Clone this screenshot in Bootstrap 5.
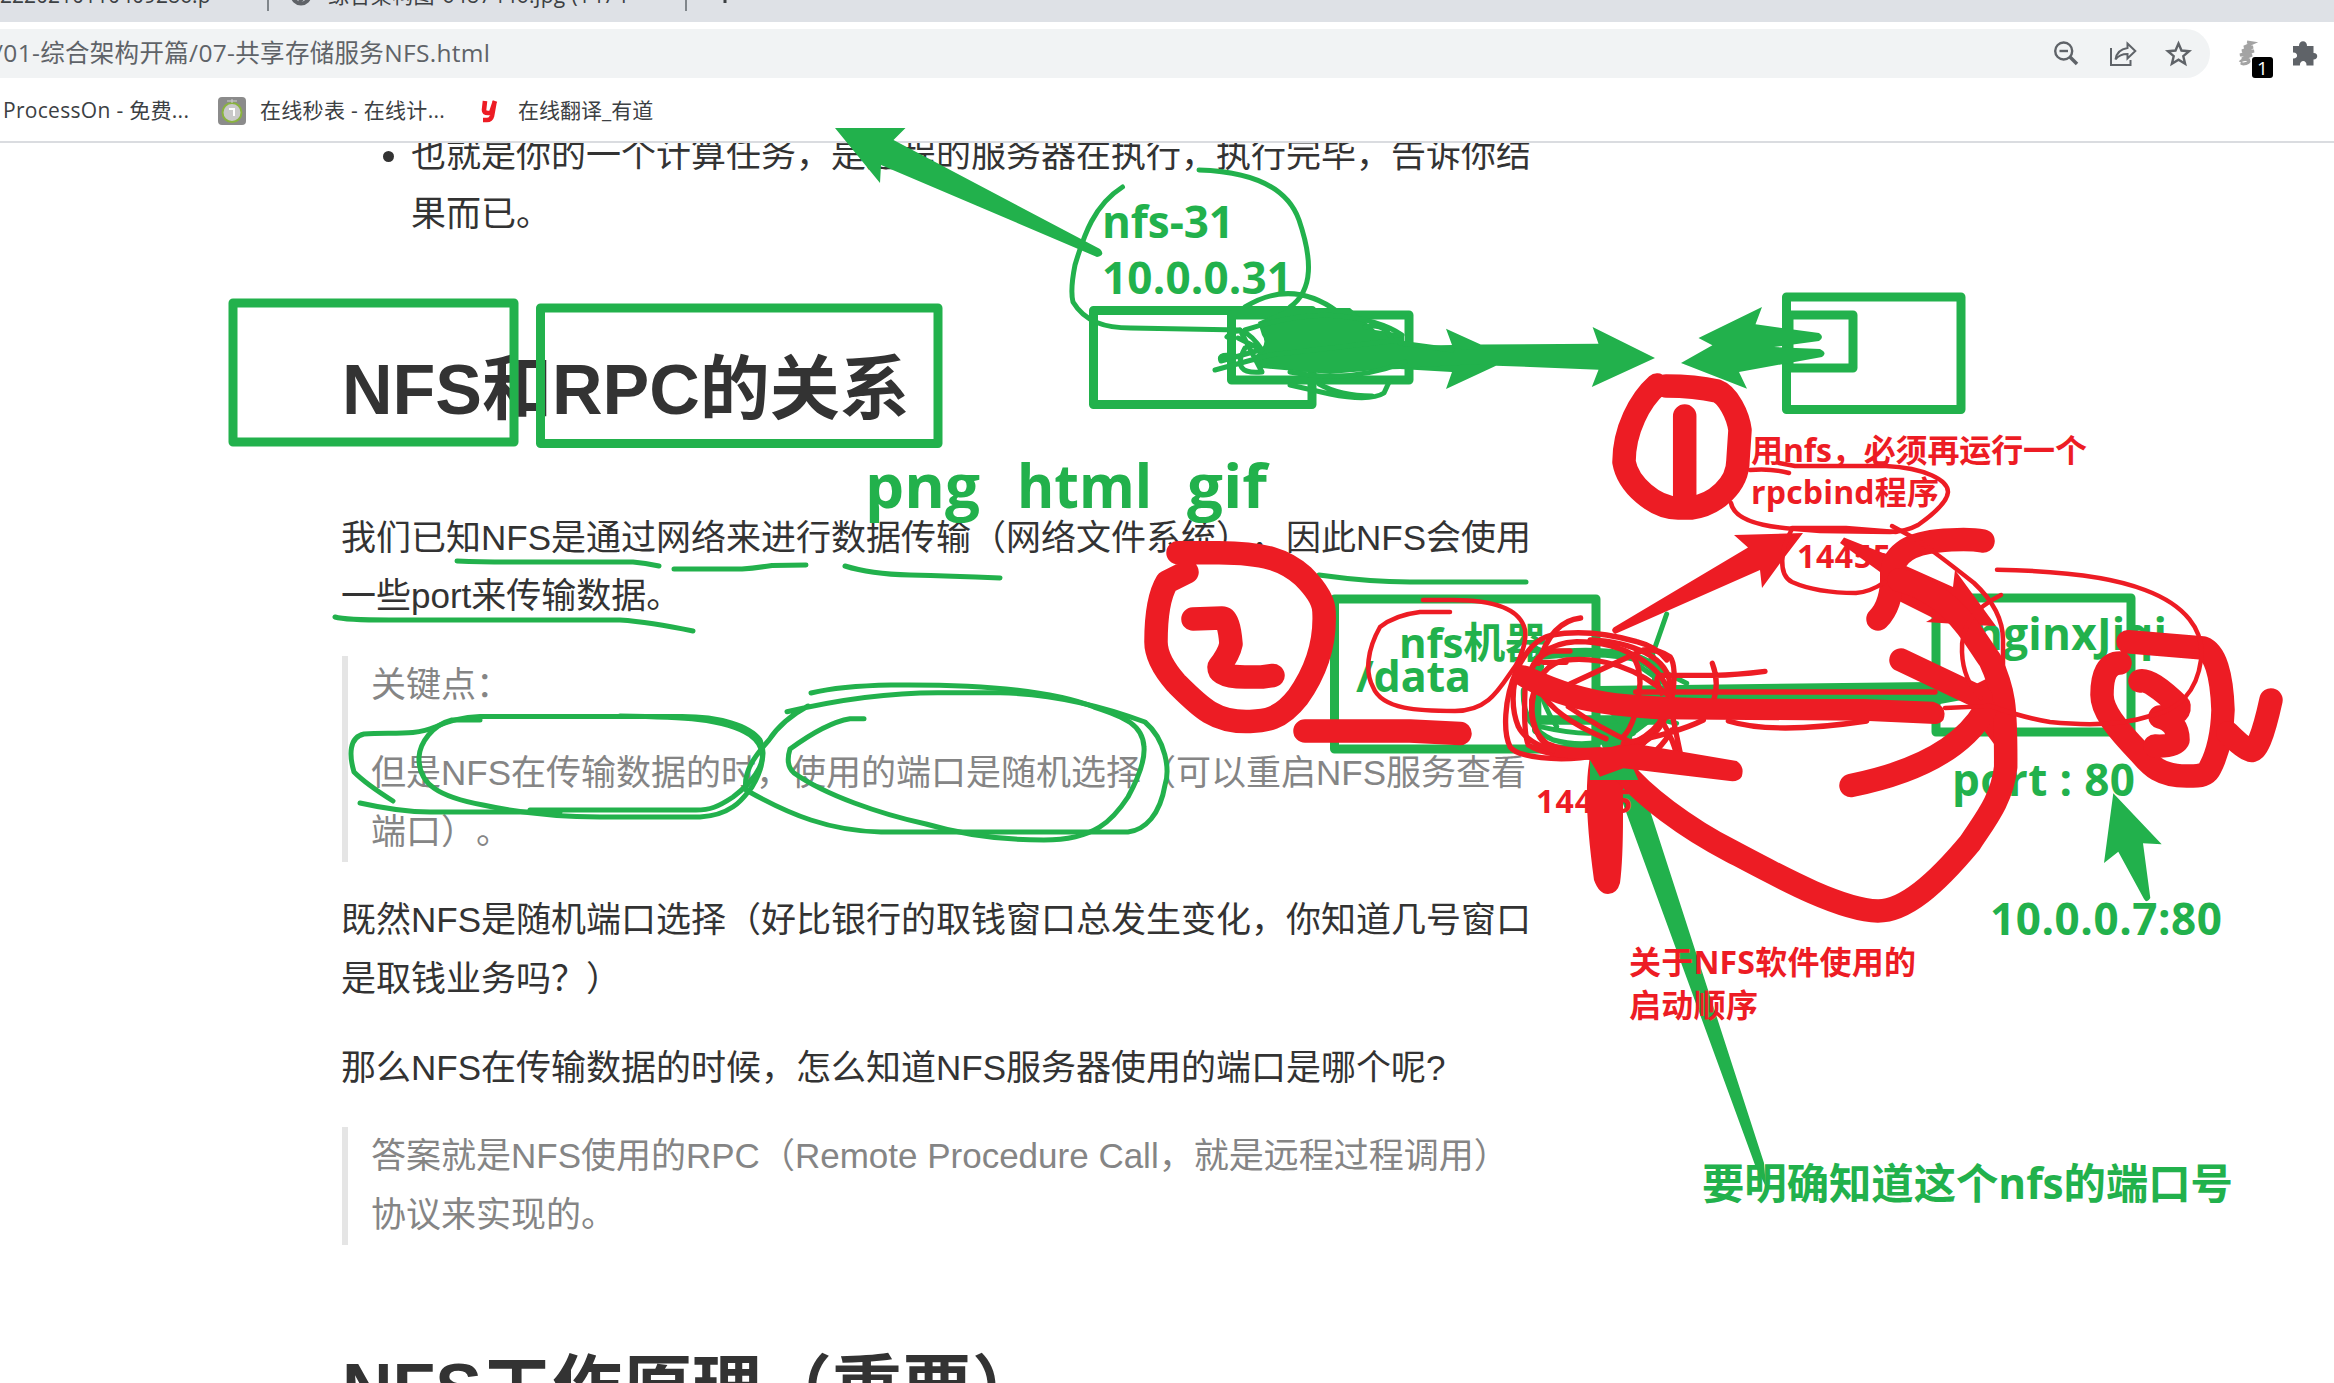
<!DOCTYPE html>
<html lang="zh-CN">
<head>
<meta charset="utf-8">
<title>07-共享存储服务NFS</title>
<link href="https://cdn.jsdelivr.net/npm/bootstrap@5.3.0/dist/css/bootstrap.min.css" rel="stylesheet">
<style>
body{width:2334px;height:1383px;overflow:hidden;background:#fff;color:#333;font-family:"Liberation Sans","Noto Sans CJK SC",sans-serif;text-spacing-trim:space-all}
.chrome-ui{font-family:"Open Sans","Noto Sans CJK SC",sans-serif}
.tabstrip{height:22px;background:#dee1e6;font-size:21px;line-height:28px;color:#3c4043}
.tabstrip>div{margin-top:-19px;height:30px;white-space:nowrap;overflow:hidden}
.tab-title{letter-spacing:.4px}
.tab-sep{width:2px;background:#80868b}
.toolbar{height:63px;padding-top:7px}
.omnibox{width:2210px;height:49px;background:#f1f3f4;border-radius:0 25px 25px 0;color:#5f6368;font-size:24.5px}
.url-text{letter-spacing:.32px;margin-left:-6px}
.bookmarks{height:58px;border-bottom:2px solid #dadce0;font-size:21px;color:#3c4043;padding-bottom:4px}
.bm-on{width:218px;padding-left:3px;letter-spacing:.3px}
.bm-watch{width:235px;padding-left:14px;letter-spacing:.3px}
.bm-dict{padding-left:18px}
.reader{padding-left:341px;font-size:35px;line-height:58.8px}
.reader ul{margin:-17.2px 0 101.3px;padding-left:70px}
.reader h1{font-size:70px;line-height:90px;font-weight:700;margin:0 0 73.9px;padding-left:1px}
.reader p{margin:0 0 29.6px}
.reader blockquote{margin:0 0 29.6px;padding-left:23px;border-left:6px solid #e5e5e5;color:#858585;font-size:35px}
.reader blockquote{margin-left:1px}
.reader blockquote p:last-child{margin:0}
.reader .next-title{margin:99.7px 0 0}
.reader p,.reader li,.reader h1{white-space:nowrap}
.ink{z-index:5}
.ink text{font-family:"Open Sans","Noto Sans CJK SC",sans-serif;font-weight:700}
.g{fill:#22b14c}.r{fill:#ed1c24}
.gl,.rl,.rb{fill:none;stroke-linecap:round;stroke-linejoin:round}
.gl{stroke:#22b14c;stroke-width:5}
.gbox{stroke-width:9}
.rl{stroke:#ed1c24;stroke-width:4.5}
.rb{stroke:#ed1c24;stroke-width:23.5}
.knot-g{stroke-width:15}
.knot-r{stroke-width:16}
</style>
<script src="https://cdn.jsdelivr.net/npm/bootstrap@5.3.0/dist/js/bootstrap.bundle.min.js"></script>
</head>
<body class="d-flex flex-column position-relative">
<header class="chrome-ui flex-shrink-0">
  <div class="tabstrip d-flex overflow-hidden">
    <div style="width:267px">2220210110409286.p</div>
    <div class="tab-sep"></div>
    <div class="d-flex" style="width:416px">
      <svg class="ms-3 mt-1 flex-shrink-0" style="margin-right:9px" width="34" height="22" viewBox="0 0 34 22"><circle cx="16" cy="10" r="8.5" fill="none" stroke="#5f6368" stroke-width="4"/><path d="M9 8h7l3 5-5 4" fill="none" stroke="#5f6368" stroke-width="3"/></svg>
      <span class="tab-title">综合架构图-6487446.jpg (1474</span>
    </div>
    <div class="tab-sep"></div>
    <svg width="80" height="22" viewBox="0 0 80 22"><path d="M38-8V3M28-4H48" stroke="#3c4043" stroke-width="3"/></svg>
  </div>
  <div class="toolbar d-flex">
    <div class="omnibox d-flex align-items-center">
      <span class="url-text text-nowrap">/01-综合架构开篇/07-共享存储服务NFS.html</span>
      <svg class="ms-auto" width="157" height="49" viewBox="2053 29 157 49" fill="none" stroke="#5f6368" stroke-width="2.4">
        <circle cx="2063.7" cy="51" r="8.5"/><path d="M2059.5 51h8.5"/><path d="M2070 57l7 7" stroke-width="3.6"/>
        <path d="M2111 48v17h19.5v-5" stroke-width="2"/><path d="M2127.500 43.500l7.800 7.500-7.800 7.500v-4.500c-5 0-9 1.500-12 5.500 1-7 5-10.500 12-11.500z" stroke-width="2"/>
        <path d="M2178.500 43.500l3 7 7.600.7-5.800 5 1.800 7.500-6.600-4-6.600 4 1.800-7.500-5.800-5 7.600-.7z"/>
      </svg>
    </div>
    <svg width="124" height="56" viewBox="2210 29 124 56">
      <g fill="none" stroke="#a3a3a3" stroke-width="3"><path d="M2247 42l6 1-9 4 9 0-11 4 12 0-14 4 12 0-10 4 8 1"/><path d="M2240 62c2-3 8-3 9-1s-6 4-8 2"/></g>
      <rect x="2252" y="57" width="21" height="21" rx="3" fill="#000"/><text x="2262.500" y="74.500" font-size="19" fill="#fff" text-anchor="middle">1</text>
      <path fill="#5f6368" d="M2293 46h6c-.3-6.500 8.300-6.500 8 0h6.500v7c5-.3 5 6.600 0 6.500v6h-7c.5-6-7-6-6.600 0h-6.900v-7c5.500.5 5.500-6.500 0-6z"/>
    </svg>
  </div>
  <div class="bookmarks d-flex align-items-center text-nowrap">
    <span class="bm-on">ProcessOn - 免费...</span>
    <svg width="28" height="28" viewBox="0 0 28 28"><rect width="28" height="28" rx="4" fill="#8b8b8b"/><circle cx="14" cy="15.500" r="9.500" fill="#c9c9c9" stroke="#8ab33f" stroke-width="2"/><path d="M11 12h5v7" fill="none" stroke="#fff" stroke-width="2"/><path d="M9 4h10M14 2v4" stroke="#d0d0d0"/></svg>
    <span class="bm-watch">在线秒表 - 在线计...</span>
    <svg width="19" height="24" viewBox="0 0 19 24"><path d="M4 2L3 11q0 3 4 3h3L14 2M13.500 3L11 17q-1 4-5 4H2" fill="none" stroke="#ed1c24" stroke-width="4.600"/></svg>
    <span class="bm-dict">在线翻译_有道</span>
  </div>
</header>
<main class="flex-grow-1 overflow-hidden">
  <article class="reader">
    <ul><li>也就是你的一个计算任务，是远程的服务器在执行，执行完毕，告诉你结<br>果而已。</li></ul>
    <h1>NFS和RPC的关系</h1>
    <p>我们已知NFS是通过网络来进行数据传输（网络文件系统），因此NFS会使用<br>一些port来传输数据。</p>
    <blockquote>
      <p>关键点：</p>
      <p>但是NFS在传输数据的时，使用的端口是随机选择（可以重启NFS服务查看<br>端口）。</p>
    </blockquote>
    <p>既然NFS是随机端口选择（好比银行的取钱窗口总发生变化，你知道几号窗口<br>是取钱业务吗？）</p>
    <p>那么NFS在传输数据的时候，怎么知道NFS服务器使用的端口是哪个呢?</p>
    <blockquote>
      <p>答案就是NFS使用的RPC（Remote Procedure Call，就是远程过程调用）<br>协议来实现的。</p>
    </blockquote>
    <h1 class="next-title">NFS工作原理（重要）</h1>
  </article>
</main>

<!-- pen annotations drawn over the page -->
<svg class="ink position-absolute top-0 start-0" width="2334" height="1383" viewBox="0 0 2334 1383">
  <!-- green boxes -->
  <g class="gl gbox">
    <rect x="233" y="303" width="281" height="139"/><rect x="540.500" y="308" width="397.500" height="135.500"/>
    <rect x="1093.500" y="310.500" width="218.500" height="94"/><rect x="1231.500" y="315" width="177.500" height="65"/>
    <rect x="1786.500" y="297" width="174.500" height="112.500"/><rect x="1789" y="315" width="64" height="53"/>
    <rect x="1334.500" y="599" width="261.500" height="150"/><rect x="1936" y="598" width="195" height="134"/>
  </g>
  <!-- green arrows -->
  <g class="g">
    <path d="M835 128H905.500L893.500 140L1100 249Q1106 255 1097 257L881 165L880 183Z"/>
    <path d="M1655 358L1592.600 327L1598.500 343.700L1480.700 344.500L1446 328.700L1452 345L1400 346L1300 335V372L1400 369L1452 372L1446 389L1496 365.700L1598.500 369.700L1591.800 387Z"/>
    <path d="M1698.500 338L1762 307L1755.500 324.300L1819 333Q1825 337 1819 341L1774 347L1820 349Q1828 353 1822 357L1739 372L1747 388.700L1681 363L1712.400 345.300Z"/>
    <path d="M2113.300 793.300L2161.700 844.300L2143 843.300L2150.300 898Q2147 904 2144 899L2118.300 851.700L2104 863Z"/>
    <path d="M1766 1187L1755 1165L1618 790L1600 740L1625 700L1640 780L1654 823L1764 1163Z"/>
    <path d="M1599 686L1931 682L1962 700L1940 704H1599Z"/>
  </g>
  <!-- green pen strokes -->
  <g class="gl">
    <path d="M457 561Q480 562 508 562H633Q645 563 659 566"/><path d="M674 569H742Q755 568 772 565.500L806 565"/>
    <path d="M845 566Q870 574 910 575T1000 578"/><path d="M335 617Q345 620 389 620H620Q650 622 693 631"/><path d="M1319 575Q1370 582 1410 582H1526"/>
    <path d="M393 801Q366 784 354 772C349 755 349 737 364 734C390 732 415 736 435 727C450 721 462 717 480 716.500H679C720 716 750 726 760 740C772 765 745 788 733 797C718 807 710 810 696 810H530"/>
    <path d="M480 720H452C432 725 420 743 419 757C418 785 440 797 483 805C520 813 565 817 600 817H700C735 815 745 795 752 787C768 760 764 745 750 735C725 718 680 717 620 716"/>
    <path d="M360 803Q400 812 430 812H560"/>
    <path d="M864 718.700H850C830 722 805 738 790 749Q785 765 794 773C825 795 880 814 926 824C960 834 1000 840 1044 840C1095 840 1113 820 1128 797C1140 775 1145 760 1144 747C1143 725 1125 717 1094 707C1050 690 980 684 891 685Q840 686 811 693"/>
    <path d="M787 711.700Q870 692 943 692.700H1000C1060 694 1110 709 1145 722C1166 740 1170 770 1165 785C1160 815 1145 830 1128 832H881C830 831 790 815 746 790C742 770 760 750 769 740Q782 720 808 706"/>
    <path d="M1122.500 187C1094 205 1084 235 1075 265Q1070 290 1073 302C1085 322 1105 328 1131 328L1240 330"/>
    <path d="M1199 170C1265 172 1290 195 1299 220C1312 258 1314 290 1290 307M1245 307Q1292 278 1338 312"/>
  </g>
  <path class="g" d="M1258 322L1290 308H1350L1375 330L1404 334V346L1480 350V364L1400 368L1330 374L1262 368L1252 358Q1270 345 1262 335Z"/>
  <g class="gl">
    <path d="M1245 330Q1300 312 1340 316T1402 335M1227 337Q1242 320 1262 350L1238 338M1239 357Q1217 352 1221 361L1260 350M1215 370L1270 355L1400 340M1245 348Q1230 375 1262 372L1240 330M1365 327Q1385 322 1392 340M1290 385L1330 394Q1370 402 1384 393L1390 380M1319 384Q1340 396 1372 396M1290 372Q1350 384 1405 362M1400 343L1452 350"/>
  </g>
  <!-- text labels beneath the red pen -->
  <g class="g" font-size="44">
    <text x="1102" y="238" textLength="132">nfs-31</text><text x="1102" y="294" textLength="190">10.0.0.31</text>
    <g font-size="60"><text x="865" y="508" textLength="115" lengthAdjust="spacingAndGlyphs">png</text><text x="1017" y="508" textLength="135" lengthAdjust="spacingAndGlyphs">html</text><text x="1187" y="508" textLength="80" lengthAdjust="spacingAndGlyphs">gif</text></g>
    <text x="1399" y="658" font-size="42" textLength="148">nfs机器</text><text x="1356" y="692" font-size="43" textLength="115">/data</text>
    <text x="1974" y="650" textLength="193">nginxJiqi</text><text x="1952" y="796" textLength="183">port : 80</text>
    <text x="1990" y="935" textLength="232">10.0.0.7:80</text><text x="1702" y="1199" font-size="42.400" textLength="531">要明确知道这个nfs的端口号</text>
  </g>
  <g class="r" font-size="32">
    <text x="1751" y="462" textLength="336">用nfs，必须再运行一个</text><text x="1751" y="504" textLength="188">rpcbind程序</text>
    <text x="1797" y="568" textLength="94">14455</text><text x="1536" y="813" textLength="96">14455</text>
    <text x="1629" y="974" textLength="287">关于NFS软件使用的</text><text x="1629" y="1017" textLength="129">启动顺序</text>
  </g>
  <!-- numbered marks -->
  <g class="rb">
    <path d="M1657 385C1640 400 1624 430 1624 462C1628 485 1655 508 1678 508H1691C1715 505 1738 485 1738 460L1740 430C1738 415 1728 395 1717 391Q1695 386 1666 386M1684.700 416V505"/>
    <path d="M1178 552.700H1219C1265 553 1285 560 1303 576Q1324 597 1324 612C1326 650 1310 680 1298 697C1280 720 1265 721 1250 721.500C1215 723 1200 707 1176 683Q1156 660 1156 642Q1156 600 1167 582L1187 572"/>
    <path d="M1193 619L1222 618Q1229 618 1231 644Q1229 654 1219 667Q1219 677 1245 677H1262L1273 675.500M1305 731H1410L1460 733.500"/>
    <path d="M2128 641.700L2203 648Q2221 655 2223 710Q2222 745 2210 768Q2206 777 2190 776C2160 777 2150 765 2140 753C2115 727 2102 710 2102 695Q2102 663 2120 663"/>
    <path d="M2140 681Q2150 678 2179 706Q2180 716 2160 717Q2178 722 2178 740Q2174 747 2155 746M2228 733Q2243 748 2250 750Q2259 755 2271 700"/>
  </g>
  <!-- red arrows -->
  <g class="r">
    <path d="M1613.600 627.500L1748 547.500L1734 535L1803 533L1782 560.500L1762 588L1760 570L1615 634Q1610 631 1613.600 627.500Z"/>
    <path d="M1844 537.500L1883 553L1906 566L1953 587L1955 570L1996 626L1971 625L1926 622L1933 618L1899 601L1880 590V572L1840 543Z"/>
    <path d="M1590 755L1589 763Q1583 800 1594 880Q1599 894 1608 894T1620 883Q1623 860 1623 817V770L1650 740Z"/>
    <path d="M1968 688L2000 672L2012 700V735L1994 744L1980 725Z"/>
  </g>
  <g class="rb">
    <path d="M1983 541Q1967 538 1937 541Q1892 546 1892 575Q1892 605 1878 619"/>
    <path d="M1899 580C1955 595 1975 640 1990 660C2004 690 2006 705 2005.700 767C2002 800 1985 820 1970 843C1935 885 1905 911 1878 911C1840 910 1780 877 1731 851C1690 830 1640 795 1617 763"/>
    <path d="M1901 660L1981 698M1851 785.500Q1953 765 1985 710"/>
  </g>
  <!-- tangle around the port of the nfs machine -->
  <g transform="translate(1490 600) scale(.33333)">
    <g class="gl knot-g">
      <path d="M150 165Q300 150 400 165Q470 175 500 215V300M125 360H520M140 180V390" stroke-width="28"/>
      <path d="M530 42L480 185M100 270Q95 380 190 420Q300 450 430 400M150 380Q280 410 350 395M480 150L510 210L590 250M450 200L580 290M330 270H560M360 330L390 365L440 330M470 350L560 370M155 200Q130 270 200 380"/>
    </g>
    <g class="g"><path d="M330 258H520V310H330ZM305 370H480L400 430H305ZM470 130L515 195L540 240L490 220Z"/><path d="M300 470L400 440L445 540H300Z"/></g>
    <g class="rl knot-r">
      <path d="M272 54C210 60 170 110 145 190M240 153H190Q130 165 105 260M228 187H160"/>
      <path d="M240 252L460 150Q500 145 540 170Q562 200 545 300Q520 400 440 440"/>
      <path d="M300 120C420 125 540 170 540 260C545 380 440 450 330 465C200 490 80 470 60 440C40 400 40 300 80 210C110 150 140 115 185 105Q300 85 440 125Q500 140 530 180"/>
      <path d="M540 300C530 200 400 125 260 125C150 130 115 200 105 270Q100 400 115 435Q180 475 300 465Q470 440 520 350"/>
      <path d="M540 290C440 200 330 170 230 180Q150 190 125 300Q120 440 230 465M400 150Q450 170 450 250Q440 370 400 410"/>
      <path d="M75 240Q60 320 85 380Q110 430 200 455Q300 470 400 440M130 290Q110 380 170 430Q240 460 330 450"/>
      <path d="M150 270Q190 350 348 416M235 320Q330 385 430 430"/>
      <path d="M825 214Q740 225 670 226H510Q490 235 515 280M667 190Q690 250 668 310M437 276H1335M715 363Q850 405 1130 363M640 360Q560 400 400 430M520 370Q550 420 560 465M548 350L572 465M500 450Q530 420 545 390"/>
    </g>
    <g class="r"><path d="M75 200Q90 188 130 205Q260 265 380 280Q540 295 760 297L1120 297L1330 305Q1375 320 1360 360Q1350 372 1335 372L1120 362L500 358Q300 345 200 310Q140 290 75 250Q60 225 75 200Z"/><path d="M200 440Q330 450 440 432L740 483Q765 500 755 530Q745 546 720 543L400 505L330 530L300 480L190 470Z"/></g>
  </g>
  <!-- thin red strokes -->
  <g class="rl">
    <path d="M1450 612H1420Q1395 615 1380 627C1367 650 1365 672 1373 687C1382 710 1420 711 1455 711C1490 711 1500 687 1516 665Q1527 645 1525 630C1520 607 1490 600 1453 600H1423"/>
    <path d="M1789 473Q1770 468 1750 470M1779 463L1795 466H1886C1925 468 1948 480 1948 492C1947 505 1925 520 1918 525Q1905 532 1890 532L1820 531L1795 529Q1735 525 1731 503"/>
    <path d="M1792 529C1780 550 1778 575 1792 582C1810 590 1835 593 1856 593Q1870 592 1885 582M1792 528H1846L1896 532"/>
    <path d="M1892 526L1914 538Q1935 552 1974 583Q2003 610 2003 640V671M2001 595Q1960 615 1962 652Q1963 680 1981 698"/>
    <path d="M1997 569.700C2070 571 2115 578 2145 590C2185 605 2205 630 2201 660C2197 690 2180 710 2150 716C2120 726 2080 725 2050 722Q2025 718 1990 706L1945 708"/>
  </g>
</svg>
</body>
</html>
